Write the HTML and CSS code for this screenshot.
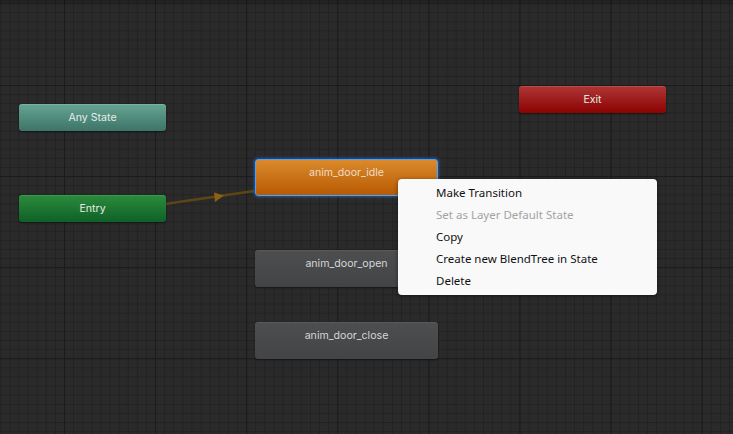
FILE: index.html
```html
<!DOCTYPE html>
<html>
<head>
<meta charset="utf-8">
<link rel="stylesheet" href="styles.css">
</head>
<body>
<div class="canvas">
  <svg class="links" width="733" height="434" viewBox="0 0 733 434">
    <line x1="165" y1="204" x2="254" y2="191" stroke="#5e4516" stroke-width="2.4"/>
    <polygon points="214,192.5 224,195.5 215,202" fill="#8a6212"/>
  </svg>
  <div class="node any" style="left:19px;top:104px;">Any State</div>
  <div class="node entry" style="left:19px;top:195px;">Entry</div>
  <div class="node exit" style="left:519px;top:86px;">Exit</div>
  <div class="node state idle" style="left:255px;top:159px;">anim_door_idle</div>
  <div class="node state" style="left:255px;top:250px;">anim_door_open</div>
  <div class="node state" style="left:255px;top:322px;">anim_door_close</div>
  <ul class="menu">
    <li>Make Transition</li>
    <li class="disabled">Set as Layer Default State</li>
    <li>Copy</li>
    <li>Create new BlendTree in State</li>
    <li>Delete</li>
  </ul>
</div>
</body>
</html>
```

FILE: styles.css
```css
html, body {
  margin: 0;
  padding: 0;
  background: #282828;
}
.canvas {
  position: relative;
  width: 733px;
  height: 434px;
  overflow: hidden;
  background-color: #2a2a2a;
  background-image:
    linear-gradient(rgba(0,0,0,0.22), rgba(0,0,0,0) 7px),
    linear-gradient(#1b1b1b 1px, transparent 1px),
    linear-gradient(90deg, #1b1b1b 1px, transparent 1px),
    linear-gradient(#222222 1px, transparent 1px),
    linear-gradient(90deg, #222222 1px, transparent 1px);
  background-size: 100% 10px, 91.1px 91.1px, 91.1px 91.1px, 9.11px 9.11px, 9.11px 9.11px;
  background-repeat: no-repeat, repeat, repeat, repeat, repeat;
  background-position: 0 0, 64px 85px, 64px 85px, 64px 85px, 64px 85px;
  font-family: Inter, "Noto Sans", sans-serif;
}
.links {
  position: absolute;
  left: 0;
  top: 0;
}
.node {
  position: absolute;
  box-sizing: border-box;
  width: 147px;
  height: 27px;
  border-radius: 3px;
  font-size: 10.6px;
  line-height: 26px;
  text-align: center;
  color: #e6ece9;
  box-shadow: 0 1px 2px rgba(0,0,0,0.5);
}
.any {
  background: linear-gradient(#64a391, #3d7468);
  border-top: 1px solid #78b3a2;
  line-height: 25px;
}
.entry {
  background: linear-gradient(#2a8a3c, #0f6126);
  border-top: 1px solid #3c9a4c;
  line-height: 25px;
}
.exit {
  background: linear-gradient(#ad3434, #8c0202);
  border-top: 1px solid #bb4a4a;
  line-height: 25px;
}
.state {
  width: 183px;
  height: 37px;
  line-height: 14px;
  padding-top: 6px;
  background: linear-gradient(#4d4e50, #434446);
  border-top: 1px solid #58595b;
  color: #d6d6d6;
}
.idle {
  background: linear-gradient(#da8a2c, #b85a02);
  border: 1px solid #48a4ff;
  padding-top: 6px;
  box-shadow: 0 0 3px 1px rgba(40,130,255,0.55);
  color: #eedcc6;
}
.menu {
  position: absolute;
  left: 398px;
  top: 179px;
  width: 259px;
  height: 116px;
  box-sizing: border-box;
  margin: 0;
  padding: 3px 0 0 38px;
  list-style: none;
  background: #f9f9f9;
  border-radius: 4px;
  box-shadow: 0 1px 4px rgba(0,0,0,0.45);
  font-family: "Noto Sans", sans-serif;
  font-size: 11.5px;
  color: #111;
}
.menu li {
  height: 22px;
  line-height: 22px;
}
.menu .disabled {
  color: #a3a3a3;
}
```
